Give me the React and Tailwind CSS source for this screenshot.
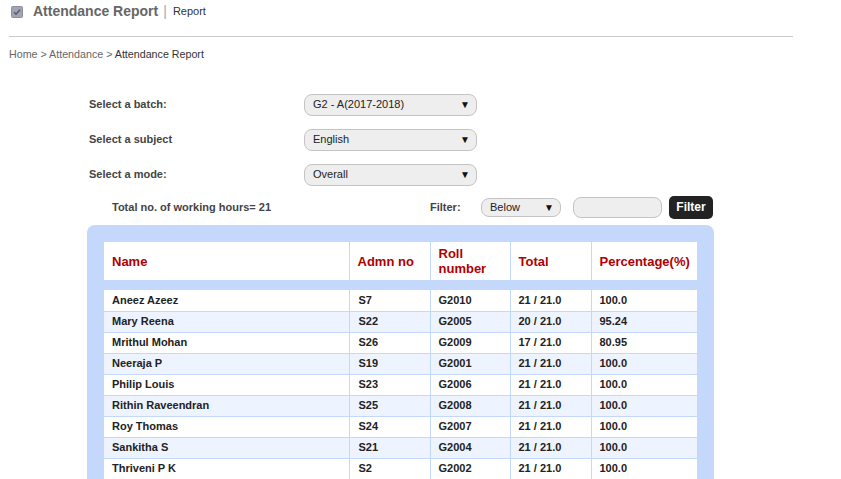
import React from 'react';

const rows = [
  { name: 'Aneez Azeez',        admn: 'S7',  roll: 'G2010', total: '21 / 21.0', pct: '100.0' },
  { name: 'Mary Reena',         admn: 'S22', roll: 'G2005', total: '20 / 21.0', pct: '95.24' },
  { name: 'Mrithul Mohan',      admn: 'S26', roll: 'G2009', total: '17 / 21.0', pct: '80.95' },
  { name: 'Neeraja P',          admn: 'S19', roll: 'G2001', total: '21 / 21.0', pct: '100.0' },
  { name: 'Philip Louis',       admn: 'S23', roll: 'G2006', total: '21 / 21.0', pct: '100.0' },
  { name: 'Rithin Raveendran',  admn: 'S25', roll: 'G2008', total: '21 / 21.0', pct: '100.0' },
  { name: 'Roy Thomas',         admn: 'S24', roll: 'G2007', total: '21 / 21.0', pct: '100.0' },
  { name: 'Sankitha S',         admn: 'S21', roll: 'G2004', total: '21 / 21.0', pct: '100.0' },
  { name: 'Thriveni P K',       admn: 'S2',  roll: 'G2002', total: '21 / 21.0', pct: '100.0' },
];

// fake select box, drawn so it looks the same in every browser
function SelectBox({ value, className }) {
  return (
    <div
      className={`flex items-center justify-between rounded-[8px] border border-[#c4c4c4] bg-[#eeeeee] pl-[8px] pr-[6px] text-[11px] text-[#222] ${className}`}
    >
      <span>{value}</span>
      <span className="text-[10px] text-[#111]">▼</span>
    </div>
  );
}

function FormRow({ label, value }) {
  return (
    <div className="flex h-[35px] items-center">
      <span className="w-[215px] text-[11px] font-bold text-[#444]">{label}</span>
      <SelectBox value={value} className="h-[22px] w-[173px]" />
    </div>
  );
}

export default function App() {
  return (
    <div className="h-[479px] w-[841px] overflow-hidden bg-white font-['Liberation_Sans',Arial,sans-serif]">
      {/* Title bar */}
      <div className="flex h-[23px] items-center pl-[11px]">
        <svg width="12" height="12" viewBox="0 0 12 12" className="mr-[10px]">
          <rect x="0.5" y="0.5" width="11" height="11" rx="1" fill="#a2a3b3" stroke="#8d8e9e" />
          <path d="M3 6.2 L5 8.2 L9 3.8" fill="none" stroke="#5a5b6b" strokeWidth="1.6" />
        </svg>
        <span className="text-[14px] font-bold text-[#666]">Attendance Report</span>
        <span className="ml-[5px] text-[14px] text-[#99aabb]">|</span>
        <span className="ml-[6px] text-[11px] text-[#333]">Report</span>
      </div>

      <div className="ml-[9px] mt-[13px] h-px w-[784px] bg-[#cccccc]" />

      {/* Breadcrumb */}
      <div className="mt-[11px] pl-[9px] text-[10.7px] leading-[13px] text-[#666]">
        Home &gt; Attendance &gt; <span className="text-[#333]">Attendance Report</span>
      </div>

      {/* Filters */}
      <div className="mt-[26px] pl-[89px]">
        <FormRow label="Select a batch:" value="G2 - A(2017-2018)" />
        <FormRow label="Select a subject" value="English" />
        <FormRow label="Select a mode:" value="Overall" />
      </div>

      <div className="mt-[2px] flex h-[26px] items-center">
        <span className="ml-[112px] w-[318px] text-[11px] font-bold text-[#444]">Total no. of working hours= 21</span>
        <span className="w-[51px] text-[11px] font-bold text-[#444]">Filter:</span>
        <SelectBox value="Below" className="h-[19px] w-[80px]" />
        <div className="ml-[12px] h-[21px] w-[89px] rounded-[8px] border border-[#c4c4c4] bg-[#eeeeee]" />
        <button className="ml-[7px] h-[23px] w-[44px] rounded-[5px] bg-[#222] text-[12px] font-bold text-white">
          Filter
        </button>
      </div>

      {/* Report panel */}
      <div className="ml-[87px] mt-[5px] w-[627px] rounded-t-[8px] bg-[#c4d8fc] px-[17px] pt-[17px]">
        <table className="w-[593px] table-fixed border-collapse bg-white">
          <colgroup>
            <col className="w-[245px]" />
            <col className="w-[81px]" />
            <col className="w-[80px]" />
            <col className="w-[81px]" />
            <col className="w-[106px]" />
          </colgroup>
          <thead>
            <tr className="h-[38px] text-left text-[13px] font-bold leading-[15px] text-[#b00000]">
              <th className="border-l-0 border-r border-[#c4d8fc] pl-[8px] font-bold">Name</th>
              <th className="border-r border-[#c4d8fc] pl-[8px] font-bold">Admn no</th>
              <th className="border-r border-[#c4d8fc] pl-[8px] font-bold">Roll<br />number</th>
              <th className="border-r border-[#c4d8fc] pl-[8px] font-bold">Total</th>
              <th className="pl-[8px] font-bold">Percentage(%)</th>
            </tr>
          </thead>
        </table>

        <table className="mt-[10px] w-[593px] table-fixed border-collapse">
          <colgroup>
            <col className="w-[245px]" />
            <col className="w-[81px]" />
            <col className="w-[80px]" />
            <col className="w-[81px]" />
            <col className="w-[106px]" />
          </colgroup>
          <tbody>
            {rows.map((r, i) => (
              <tr
                key={r.name}
                className={`h-[21px] border-b border-[#c4d8fc] text-[11px] font-bold text-[#222] ${i % 2 ? 'bg-[#eef4ff]' : 'bg-white'}`}
              >
                <td className="border-r border-[#c4d8fc] pl-[8px]">{r.name}</td>
                <td className="border-r border-[#c4d8fc] pl-[9px]">{r.admn}</td>
                <td className="border-r border-[#c4d8fc] pl-[8px]">{r.roll}</td>
                <td className="border-r border-[#c4d8fc] pl-[8px]">{r.total}</td>
                <td className="pl-[8px]">{r.pct}</td>
              </tr>
            ))}
          </tbody>
        </table>
      </div>
    </div>
  );
}
